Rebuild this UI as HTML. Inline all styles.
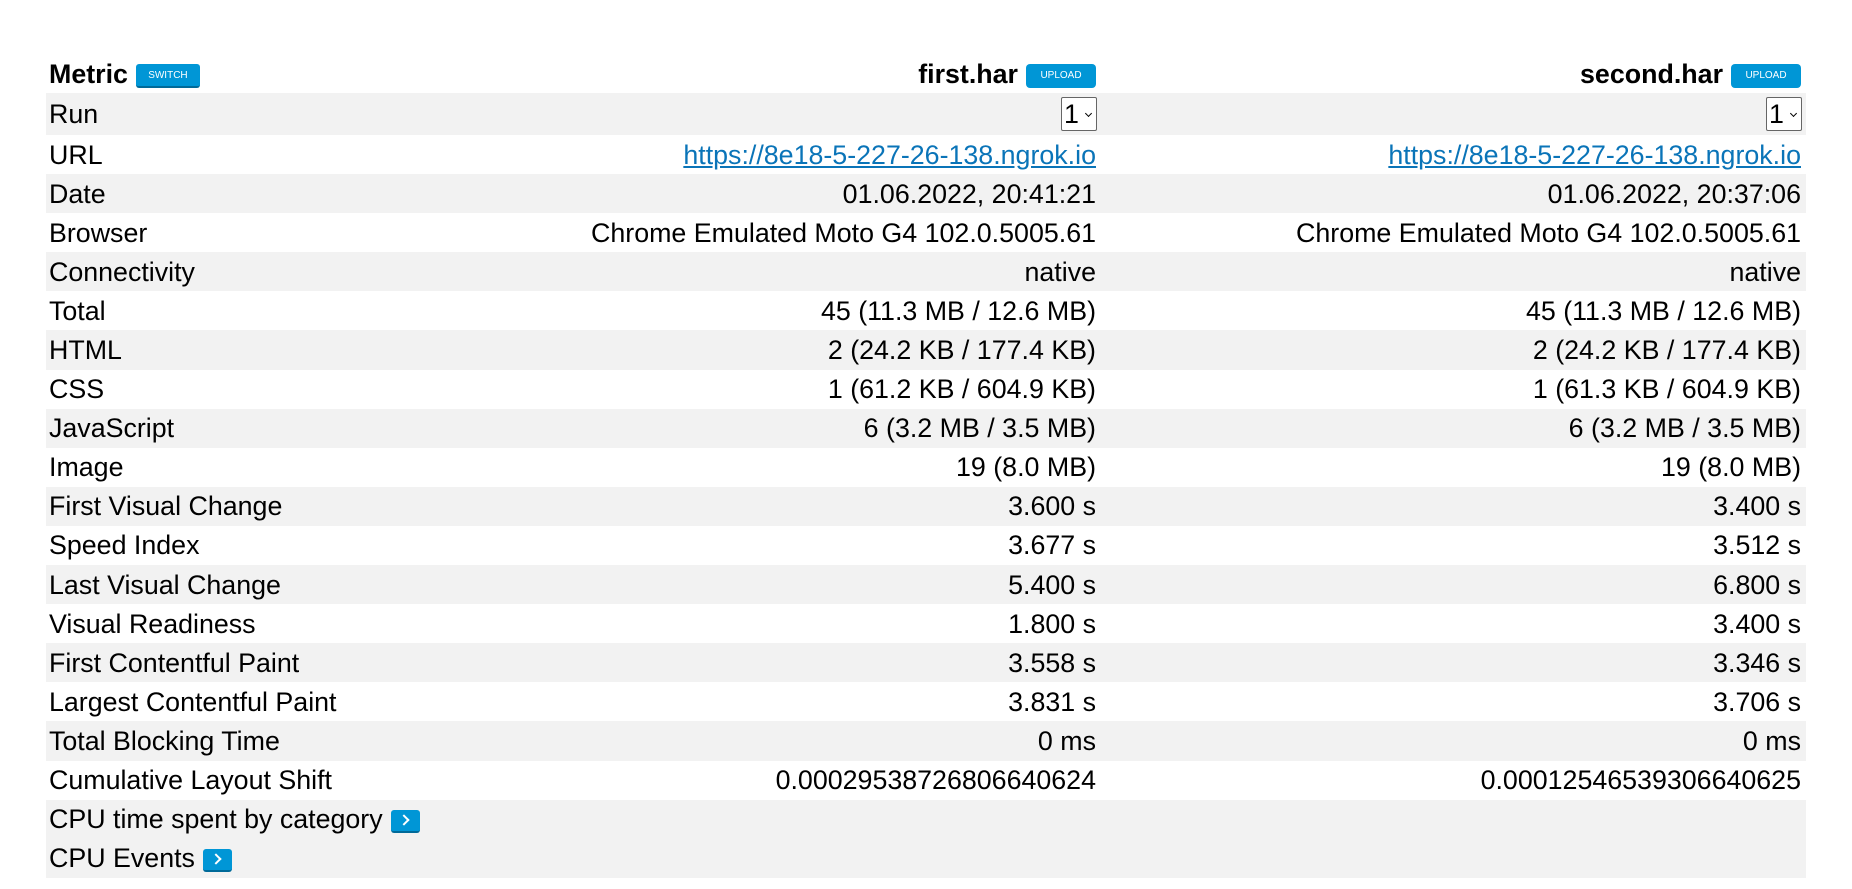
<!DOCTYPE html>
<html><head><meta charset="utf-8"><style>
html,body{margin:0;padding:0;background:#fff;width:1852px;height:889px;overflow:hidden}
body{font-family:"Liberation Sans",Arial,sans-serif;font-size:26.8px;color:#000}
table{position:absolute;left:46px;top:54px;width:1760px;border-collapse:collapse;table-layout:fixed}
td,th{padding:0 5px 0 3px;white-space:nowrap;height:39.1px;line-height:30px}
th{height:39px;font-weight:bold;vertical-align:middle}
tr.g td{background:#f2f2f2}
td.r,th.r{text-align:right}
.btn{display:inline-block;background:#0096d6;color:#fff;font-size:10px;font-weight:normal;border-radius:3px;border-bottom:2px solid #006a99;vertical-align:middle;text-align:center;box-sizing:border-box;position:relative;top:1px}
.sw{width:64px;height:24px;line-height:23px;margin-left:8px}
.up{width:70px;height:24px;line-height:24px;margin-left:8px;border-bottom:none;border-radius:4px}
a{color:#0a74b8;text-decoration:underline}
.sel{display:inline-block;width:36px;height:34px;border:1px solid #666;border-radius:2px;background:#fff;box-sizing:border-box;text-align:left;padding-left:2px;line-height:32px;position:relative;margin-right:-1px}
.sel:after{content:"";position:absolute;right:5px;top:13px;width:4px;height:4px;border-right:1.5px solid #000;border-bottom:1.5px solid #000;transform:rotate(45deg)}
.ar{display:inline-block;width:29px;height:23px;background:#0096d6;border-radius:3px;border-bottom:2px solid #006a99;box-sizing:border-box;vertical-align:middle;position:relative;margin-left:8px;top:0px}
.ar:after{content:"";position:absolute;left:9px;top:6px;width:6px;height:6px;border-right:2.5px solid #fff;border-top:2.5px solid #fff;transform:rotate(45deg)}
</style></head><body>
<table>
<colgroup><col style="width:350px"><col style="width:705px"><col style="width:705px"></colgroup>
<tr style="height:39px"><th style="text-align:left">Metric<span class="btn sw">SWITCH</span></th><th class="r">first.har<span class="btn up">UPLOAD</span></th><th class="r">second.har<span class="btn up">UPLOAD</span></th></tr>
<tr class="g"><td style="height:42px">Run</td><td class="r"><span class="sel">1</span></td><td class="r"><span class="sel">1</span></td></tr>
<tr><td>URL</td><td class="r"><a>https://8e18-5-227-26-138.ngrok.io</a></td><td class="r"><a>https://8e18-5-227-26-138.ngrok.io</a></td></tr>
<tr class="g"><td>Date</td><td class="r">01.06.2022, 20:41:21</td><td class="r">01.06.2022, 20:37:06</td></tr>
<tr><td>Browser</td><td class="r">Chrome Emulated Moto G4 102.0.5005.61</td><td class="r">Chrome Emulated Moto G4 102.0.5005.61</td></tr>
<tr class="g"><td>Connectivity</td><td class="r">native</td><td class="r">native</td></tr>
<tr><td>Total</td><td class="r">45 (11.3 MB / 12.6 MB)</td><td class="r">45 (11.3 MB / 12.6 MB)</td></tr>
<tr class="g"><td>HTML</td><td class="r">2 (24.2 KB / 177.4 KB)</td><td class="r">2 (24.2 KB / 177.4 KB)</td></tr>
<tr><td>CSS</td><td class="r">1 (61.2 KB / 604.9 KB)</td><td class="r">1 (61.3 KB / 604.9 KB)</td></tr>
<tr class="g"><td>JavaScript</td><td class="r">6 (3.2 MB / 3.5 MB)</td><td class="r">6 (3.2 MB / 3.5 MB)</td></tr>
<tr><td>Image</td><td class="r">19 (8.0 MB)</td><td class="r">19 (8.0 MB)</td></tr>
<tr class="g"><td>First Visual Change</td><td class="r">3.600 s</td><td class="r">3.400 s</td></tr>
<tr><td>Speed Index</td><td class="r">3.677 s</td><td class="r">3.512 s</td></tr>
<tr class="g"><td>Last Visual Change</td><td class="r">5.400 s</td><td class="r">6.800 s</td></tr>
<tr><td>Visual Readiness</td><td class="r">1.800 s</td><td class="r">3.400 s</td></tr>
<tr class="g"><td>First Contentful Paint</td><td class="r">3.558 s</td><td class="r">3.346 s</td></tr>
<tr><td>Largest Contentful Paint</td><td class="r">3.831 s</td><td class="r">3.706 s</td></tr>
<tr class="g"><td>Total Blocking Time</td><td class="r">0 ms</td><td class="r">0 ms</td></tr>
<tr><td>Cumulative Layout Shift</td><td class="r">0.00029538726806640624</td><td class="r">0.00012546539306640625</td></tr>
<tr class="g"><td colspan="3">CPU time spent by category<span class="ar"></span></td></tr>
<tr class="g"><td colspan="3">CPU Events<span class="ar"></span></td></tr>
</table>
</body></html>
